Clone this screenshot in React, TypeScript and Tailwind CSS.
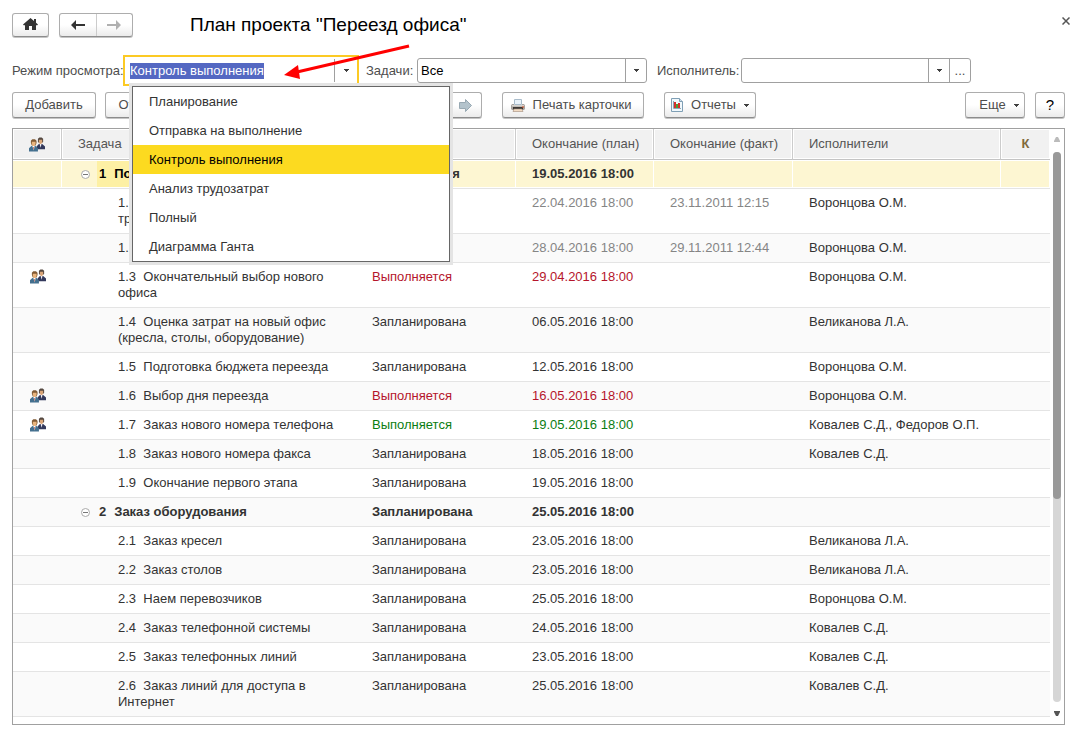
import React, { useEffect, useRef } from "react";

interface ITask {
  num: string;
  title: string;
  status: string;
  plan: string;
  fact?: string;
  people?: string;
  group?: boolean;
  selected?: boolean;
  shared?: boolean;
  tone?: "gray" | "red" | "green";
}

const tasks: ITask[] = [
  { num: "1", title: "Подготовка переезда", status: "Выполняется", plan: "19.05.2016 18:00", group: true, selected: true },
  { num: "1.1", title: "Определение основных требований к офису", status: "Выполнена", plan: "22.04.2016 18:00", fact: "23.11.2011 12:15", people: "Воронцова О.М.", tone: "gray" },
  { num: "1.2", title: "Поиск вариантов", status: "Выполнена", plan: "28.04.2016 18:00", fact: "29.11.2011 12:44", people: "Воронцова О.М.", tone: "gray" },
  { num: "1.3", title: "Окончательный выбор нового офиса", status: "Выполняется", plan: "29.04.2016 18:00", people: "Воронцова О.М.", shared: true, tone: "red" },
  { num: "1.4", title: "Оценка затрат на новый офис (кресла, столы, оборудование)", status: "Запланирована", plan: "06.05.2016 18:00", people: "Великанова Л.А." },
  { num: "1.5", title: "Подготовка бюджета переезда", status: "Запланирована", plan: "12.05.2016 18:00", people: "Воронцова О.М." },
  { num: "1.6", title: "Выбор дня переезда", status: "Выполняется", plan: "16.05.2016 18:00", people: "Воронцова О.М.", shared: true, tone: "red" },
  { num: "1.7", title: "Заказ нового номера телефона", status: "Выполняется", plan: "19.05.2016 18:00", people: "Ковалев С.Д., Федоров О.П.", shared: true, tone: "green" },
  { num: "1.8", title: "Заказ нового номера факса", status: "Запланирована", plan: "18.05.2016 18:00", people: "Ковалев С.Д." },
  { num: "1.9", title: "Окончание первого этапа", status: "Запланирована", plan: "19.05.2016 18:00" },
  { num: "2", title: "Заказ оборудования", status: "Запланирована", plan: "25.05.2016 18:00", group: true },
  { num: "2.1", title: "Заказ кресел", status: "Запланирована", plan: "23.05.2016 18:00", people: "Великанова Л.А." },
  { num: "2.2", title: "Заказ столов", status: "Запланирована", plan: "23.05.2016 18:00", people: "Великанова Л.А." },
  { num: "2.3", title: "Наем перевозчиков", status: "Запланирована", plan: "25.05.2016 18:00", people: "Воронцова О.М." },
  { num: "2.4", title: "Заказ телефонной системы", status: "Запланирована", plan: "24.05.2016 18:00", people: "Ковалев С.Д." },
  { num: "2.5", title: "Заказ телефонных линий", status: "Запланирована", plan: "23.05.2016 18:00", people: "Ковалев С.Д." },
  { num: "2.6", title: "Заказ линий для доступа в Интернет", status: "Запланирована", plan: "25.05.2016 18:00", people: "Ковалев С.Д." },
];

const modes = [
  "Планирование",
  "Отправка на выполнение",
  "Контроль выполнения",
  "Анализ трудозатрат",
  "Полный",
  "Диаграмма Ганта",
];

const tones = {
  gray: "text-[#858585]",
  red: "text-[#b5152b]",
  green: "text-[#0b7d12]",
};

const buttonClass =
  "flex items-center justify-center rounded-[3px] border border-[#adadad] border-b-[#8c8c8c] bg-gradient-to-b from-white from-50% to-[#ebebeb] shadow-[0_1px_0_#c4c4c4]";

const CaretIcon = () => (
  <svg width="5" height="3" viewBox="0 0 5 3" className="shrink-0" aria-hidden="true">
    <path d="M0 0h5v1H4v1H3v1H2V2H1V1H0z" fill="#404040" />
  </svg>
);

const HomeIcon = () => (
  <svg width="15" height="13" viewBox="0 0 15 13" aria-hidden="true">
    <path d="M7.500 0 11 3V1h2v3.800L15 6.600 14 7.600 13 6.900V12H9V8H6v4H2V6.900L1 7.600 0 6.600z" fill="#333" />
  </svg>
);

const ArrowIcon = ({ right }: { right?: boolean }) => (
  <svg width="14" height="12" viewBox="0 0 14 12" aria-hidden="true">
    {right ? (
      <path d="M0 5h9V1l5 5-5 5V7H0z" fill="#b0b0b0" />
    ) : (
      <path d="M14 5H5V1L0 6l5 5V7h9z" fill="#333" />
    )}
  </svg>
);

const PeopleIcon = () => (
  <svg width="16" height="15" viewBox="0 0 17 15" className="mx-auto block" aria-hidden="true">
    <path d="M8 12.500V9.500L10.500 7h3.500l3 2.500v3z" fill="#33395c" />
    <path d="M11.300 7h2l-1 4z" fill="#f1eff2" />
    <path d="M9.500 1.500 11 0h2.500L15 1.500V4l-1 2h-3.500L9.500 4z" fill="#544840" />
    <path d="M10.500 2.500h3.500V5l-1 2h-1.500l-1-2z" fill="#d9a578" />
    <path d="M0 15v-3.500L2.500 9H7l2.500 2.500V15z" fill="#44708f" />
    <path d="M3.500 9h2.500L5 14z" fill="#fff" />
    <path d="M4.300 10.500h1L5 14z" fill="#b54232" />
    <path d="M2 3.500 3.500 2h2.800L8 3.500V6L7 8.500H3L2 6z" fill="#805a34" />
    <path d="M3 4.500h4V7L6 9H4L3 7z" fill="#eab57e" />
  </svg>
);

const PrinterIcon = () => (
  <svg width="14" height="13" viewBox="0 0 14 13" className="shrink-0" aria-hidden="true">
    <path d="M3.500 5.500V.5h7v5z" fill="#eaf3fa" stroke="#a9bccb" />
    <path d="M1 5h2v1h8V5h2l1 1.500V10l-1 1H1l-1-1V6.500z" fill="#a8a39e" />
    <path d="M1 6h12v1.500H1z" fill="#d6d3cf" />
    <path d="M2 8h10v2.500H2z" fill="#3d3835" />
    <path d="M3 10h8l1 2.500H2z" fill="#f3dcc4" stroke="#a08a78" strokeWidth=".6" />
    <path d="M11 7.500h2v1h-2z" fill="#e2572f" />
  </svg>
);

const ReportIcon = () => (
  <svg width="12" height="14" viewBox="0 0 12 14" className="shrink-0" aria-hidden="true">
    <path d="M.5.5h8l3 3v10H.5z" fill="#f1f8fc" stroke="#7f9fb5" />
    <path d="M8.500.5v3h3" fill="#cadce8" stroke="#7f9fb5" />
    <path d="M2.500 3v7.500H10" fill="none" stroke="#8da7b8" />
    <path d="M3 4h2v6H3z" fill="#d6302b" />
    <path d="M5 6h2v4H5z" fill="#45a03a" />
    <path d="M7 5h2v5H7z" fill="#d6302b" />
  </svg>
);

const ForwardIcon = () => (
  <svg width="13" height="13" viewBox="0 0 13 13" aria-hidden="true">
    <path d="M.5 3.500h6v-3l6 6-6 6v-3h-6z" fill="#b3c3cc" stroke="#98a9b3" />
  </svg>
);

const CollapseIcon = () => (
  <svg width="9" height="9" viewBox="0 0 9 9" aria-hidden="true">
    <circle cx="4.500" cy="4.500" r="4" fill="#fff" stroke="#aaa" />
    <path d="M2 4.500h5" stroke="#777" />
  </svg>
);

const ModeSelect = () => {
  const inputRef = useRef<HTMLInputElement>(null);

  useEffect(() => {
    inputRef.current?.focus();
    inputRef.current?.select();
  }, []);

  return (
    <div className="relative h-[31px] w-[236px] shrink-0 border-2 border-[#fcca24] bg-white">
      <div className="flex h-full items-center">
        <input
          id="mode"
          ref={inputRef}
          role="combobox"
          aria-expanded="true"
          aria-controls="mode-list"
          defaultValue="Контроль выполнения"
          className="h-4 min-w-0 flex-1 pl-[5px] text-black outline-none selection:bg-[#5468c2] selection:text-white"
        />
        <button aria-label="Выбрать режим" className="flex h-[23px] w-[23px] items-center justify-center border-l border-[#a0a0a0]">
          <CaretIcon />
        </button>
      </div>
      <ul
        id="mode-list"
        role="listbox"
        className="absolute top-[29px] left-[7px] z-10 w-[318px] border border-[#666] bg-white text-[#333] shadow-[0_0_0_3px_#e4e4e4]"
      >
        {modes.map((mode) => (
          <li
            key={mode}
            role="option"
            aria-selected={mode === "Контроль выполнения"}
            className="h-[29px] px-4 leading-[29px] aria-selected:bg-[#fcda20] aria-selected:text-black"
          >
            {mode}
          </li>
        ))}
      </ul>
      <svg
        width="130"
        height="36"
        viewBox="0 0 130 36"
        className="pointer-events-none absolute -top-[14px] left-[158px] z-20"
        aria-hidden="true"
      >
        <path d="M126 3 14 29" stroke="#f00" strokeWidth="3" />
        <path d="M1 32 15 22l2 14z" fill="#f00" />
      </svg>
    </div>
  );
};

const Filters = () => (
  <div className="mt-[18px] flex items-center text-[#4d4d4d]">
    <label htmlFor="mode" className="w-[111px] shrink-0 whitespace-nowrap">Режим просмотра:</label>
    <ModeSelect />
    <label htmlFor="tasks" className="ml-[7px] w-[51px] shrink-0 whitespace-nowrap">Задачи:</label>
    <div className="relative w-[230px]">
      <select id="tasks" className="block h-[25px] w-full appearance-none rounded-[3px] border border-[#a0a0a0] bg-white px-[3px] text-black">
        <option>Все</option>
      </select>
      <span className="pointer-events-none absolute inset-y-0 right-0 flex w-[22px] items-center justify-center border-l border-[#a0a0a0]">
        <CaretIcon />
      </span>
    </div>
    <label htmlFor="person" className="ml-[10px] w-[84px] shrink-0 whitespace-nowrap">Исполнитель:</label>
    <div className="flex h-[25px] w-[230px] rounded-[3px] border border-[#a0a0a0]">
      <input id="person" className="min-w-0 flex-1 px-1 text-black outline-none" />
      <button aria-label="Выбрать из списка" className="flex w-[21px] items-center justify-center border-l border-[#a0a0a0]">
        <CaretIcon />
      </button>
      <button className="w-[21px] border-l border-[#a0a0a0]">...</button>
    </div>
  </div>
);

const Toolbar = () => (
  <div className="mt-[6px] flex h-[26px] items-stretch text-[#4d4d4d]">
    <button className={`${buttonClass} w-[84px]`}>Добавить</button>
    <button className={`${buttonClass} ml-[9px] w-[78px]`}>Открыть</button>
    <button aria-label="Переместить" className={`${buttonClass} ml-[265px] w-[34px]`}>
      <ForwardIcon />
    </button>
    <button className={`${buttonClass} ml-5 w-[142px] gap-2 pr-1`}>
      <PrinterIcon />
      Печать карточки
    </button>
    <button className={`${buttonClass} ml-5 w-[92px] gap-2`}>
      <ReportIcon />
      Отчеты
      <CaretIcon />
    </button>
    <button className={`${buttonClass} ml-auto w-[60px] gap-2 pl-2`}>
      Еще
      <CaretIcon />
    </button>
    <button className={`${buttonClass} ml-[10px] w-[30px] text-[15px] text-black`}>?</button>
  </div>
);

const headClass =
  "h-[31px] border-r border-b border-r-[#ccc] border-b-[#c4c4c4] bg-[#f1f1f1] py-0 pr-0 pl-4 text-left font-normal whitespace-nowrap shadow-[inset_0_0_0_1px_#fff]";

const TaskRow = ({ task }: { task: ITask }) => {
  const tone = task.tone ? tones[task.tone] : "";
  const cell = task.selected
    ? "border-b border-[#e4e4e4] align-top py-[6px] bg-[#fdf6d2] shadow-[inset_-1px_1px_0_#fff,inset_0_-1px_0_#fff]"
    : "border-b border-[#e4e4e4] align-top py-[6px]";

  return (
    <tr className={`even:bg-white odd:bg-[#fafafa] ${task.group ? "font-bold" : ""}`}>
      <td className={cell}>{task.shared && <PeopleIcon />}</td>
      {task.group ? (
        <td className="border-b border-[#e4e4e4] p-0">
          <div className={`flex h-7 items-center pl-[19px] ${task.selected ? "border-y border-r border-white bg-[#fdf6d2]" : ""}`}>
            <button aria-label="Свернуть">
              <CollapseIcon />
            </button>
            <div
              className={`ml-[7px] flex flex-1 items-center gap-2 self-stretch pl-[2px] ${task.selected ? "bg-[#fdf0a4] text-black" : ""}`}
            >
              <span>{task.num}</span>
              <span>{task.title}</span>
            </div>
          </div>
        </td>
      ) : (
        <td className={`${cell} pr-4 pl-14`}>{`${task.num}\u00a0\u00a0${task.title}`}</td>
      )}
      <td className={`${cell} px-4 ${tone}`}>{task.status}</td>
      <td className={`${cell} px-4 ${tone}`}>{task.plan}</td>
      <td className={`${cell} px-4 ${tone}`}>{task.fact}</td>
      <td className={`${cell} px-4`}>{task.people}</td>
      <td className={cell} />
    </tr>
  );
};

const TaskTable = () => (
  <div className="mt-[10px] flex border border-[#a0a0a0]">
    <div className="min-w-0 flex-1 pb-[7px]">
      <table className="w-full table-fixed border-separate border-spacing-0 text-[#333]">
        <colgroup>
          <col className="w-[49px]" />
          <col className="w-[294px]" />
          <col className="w-[160px]" />
          <col className="w-[138px]" />
          <col className="w-[139px]" />
          <col />
          <col className="w-[49px]" />
        </colgroup>
        <thead className="text-[#555]">
          <tr>
            <th className={headClass} aria-label="Участники">
              <div className="-ml-4">
                <PeopleIcon />
              </div>
            </th>
            <th className={headClass}>Задача</th>
            <th className={headClass}>Состояние</th>
            <th className={headClass}>Окончание (план)</th>
            <th className={headClass}>Окончание (факт)</th>
            <th className={headClass}>Исполнители</th>
            <th className="h-[31px] border-b border-[#c4c4c4] bg-[#f1f1f1] p-0 text-center font-bold text-[#806a3a] shadow-[inset_0_0_0_1px_#fff]">
              К
            </th>
          </tr>
        </thead>
        <tbody>
          {tasks.map((task) => (
            <TaskRow key={task.num} task={task} />
          ))}
        </tbody>
      </table>
    </div>
    <div className="flex w-[14px] flex-col items-center pt-2 pb-2">
      <button aria-label="Вверх" className="flex h-[15px] items-start">
        <svg width="6" height="5" viewBox="0 0 6 5" aria-hidden="true">
          <path d="M2 0h2l2 4v1H0V4z" fill="#bbb" />
        </svg>
      </button>
      <div className="w-2 flex-1 rounded-full bg-[#d6d6d6]">
        <div className="h-[63%] rounded-full bg-[#999]" />
      </div>
      <button aria-label="Вниз" className="flex h-[14px] items-end">
        <svg width="6" height="5" viewBox="0 0 6 5" aria-hidden="true">
          <path d="M0 0h6v1L4 5H2L0 1z" fill="#555" />
        </svg>
      </button>
    </div>
  </div>
);

const App = () => {
  return (
    <main className="min-h-screen bg-white pt-3 pr-[19px] pb-3 pl-3 font-['Liberation_Sans',Arial,sans-serif] text-[13px] leading-4">
      <header className="flex h-[25px] items-center">
        <button aria-label="Домой" className={`${buttonClass} h-6 w-[37px]`}>
          <HomeIcon />
        </button>
        <div className={`${buttonClass} ml-[10px] h-6 w-[74px]`}>
          <button aria-label="Назад" className="flex h-full flex-1 items-center justify-center border-r border-[#ccc]">
            <ArrowIcon />
          </button>
          <button aria-label="Вперед" className="flex h-full flex-1 items-center justify-center">
            <ArrowIcon right />
          </button>
        </div>
        <h1 className="ml-[57px] text-[19px] leading-6 text-black">План проекта "Переезд офиса"</h1>
        <button aria-label="Закрыть" className="-mr-[5px] ml-auto pb-2">
          <svg width="8" height="8" viewBox="0 0 8 8" aria-hidden="true">
            <path d="M.5.5l7 7M7.500.5l-7 7" stroke="#555" strokeWidth="1.500" />
          </svg>
        </button>
      </header>
      <Filters />
      <Toolbar />
      <TaskTable />
    </main>
  );
};

export default App;
